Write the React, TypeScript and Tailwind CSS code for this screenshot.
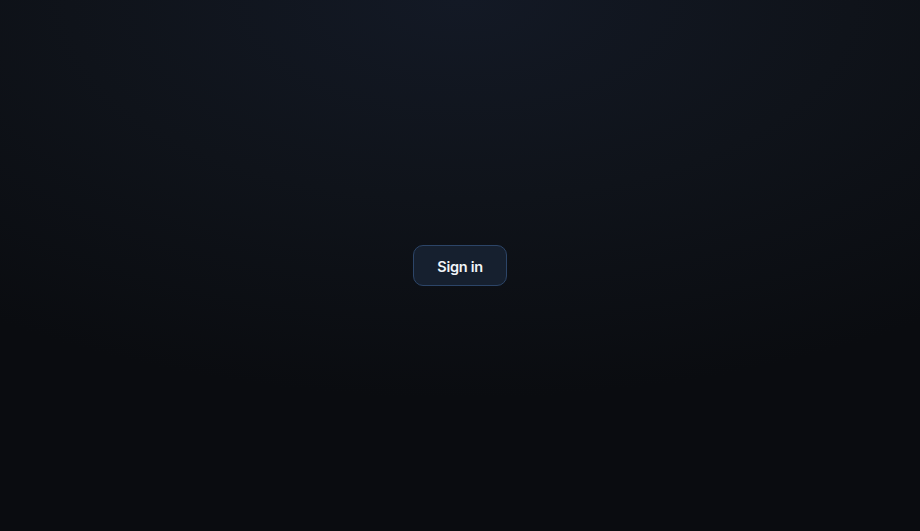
export default function App() {
  return (
    <div className="min-h-screen w-full flex items-center justify-center bg-[#0b0d11] bg-[radial-gradient(ellipse_85%_75%_at_50%_0%,#131925_0%,#0f131a_50%,#0a0c10_100%)] font-['Inter',sans-serif]">
      <button className="h-[41px] w-[94px] pt-[3px] rounded-[10px] border border-[#2c4568] bg-[#16202f] text-[14.5px] leading-none font-semibold text-[#f1f5f9] tracking-[-0.02em]">
        Sign in
      </button>
    </div>
  );
}
